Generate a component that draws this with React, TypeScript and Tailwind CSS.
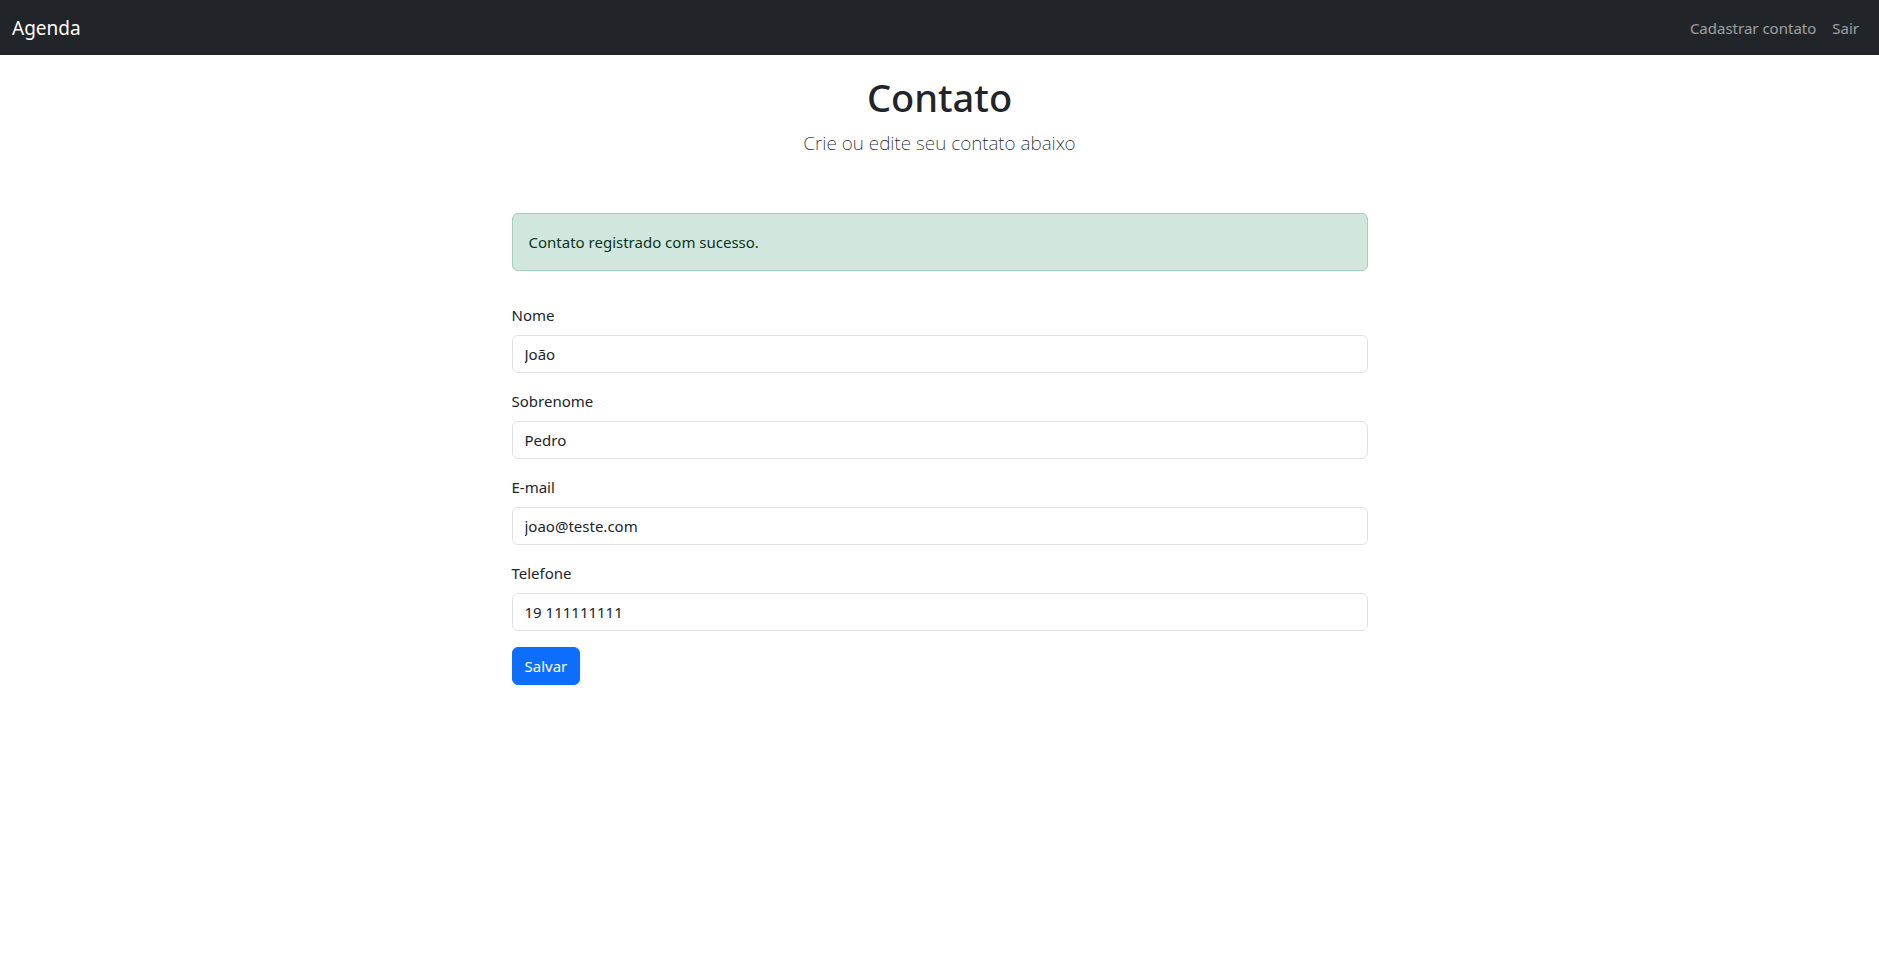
const fields = [
  { id: "first-name", label: "Nome", value: "João", type: "text" },
  { id: "last-name", label: "Sobrenome", value: "Pedro", type: "text" },
  { id: "email", label: "E-mail", value: "joao@teste.com", type: "text" },
  { id: "phone", label: "Telefone", value: "19 111111111", type: "tel" },
];

function Navbar() {
  return (
    <nav className="flex h-[55px] items-center justify-between bg-[#212529] px-3">
      <a href="#" className="text-[19px] leading-[30px] text-white">
        Agenda
      </a>
      <div className="flex">
        <a href="#" className="p-2 text-white/55">
          Cadastrar contato
        </a>
        <a href="#" className="p-2 text-white/55">
          Sair
        </a>
      </div>
    </nav>
  );
}

export default function App() {
  return (
    <div className="min-h-screen bg-white font-['Noto_Sans',sans-serif] text-[15px] leading-6 text-[#212529]">
      <Navbar />
      <main>
        <header className="pt-[18px] text-center">
          <h1 className="mb-2 text-[38px] leading-12 font-medium">Contato</h1>
          <p className="text-[19px] leading-7 font-extralight">Crie ou edite seu contato abaixo</p>
        </header>
        <div className="mx-auto mt-14 w-full max-w-[856px]">
          <div role="alert" className="rounded-md border border-[#a3cfbb] bg-[#d1e7dd] p-4 text-[#0a3622]">
            Contato registrado com sucesso.
          </div>
          <form className="mt-8" onSubmit={(event) => event.preventDefault()}>
            {fields.map((field) => (
              <div key={field.id} className="mb-4">
                <label htmlFor={field.id} className="mb-2 block">
                  {field.label}
                </label>
                <input
                  id={field.id}
                  type={field.type}
                  defaultValue={field.value}
                  className="block h-[38px] w-full rounded-md border border-[#dee2e6] bg-white px-3"
                />
              </div>
            ))}
            <button
              type="submit"
              className="h-[38px] rounded-md border border-[#0d6efd] bg-[#0d6efd] px-3 text-white"
            >
              Salvar
            </button>
          </form>
        </div>
      </main>
    </div>
  );
}
